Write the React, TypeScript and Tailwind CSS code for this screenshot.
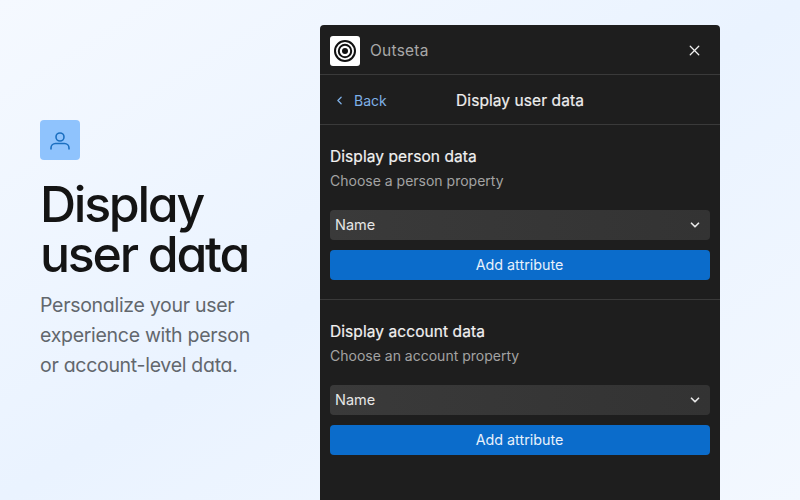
import { ChevronDown, ChevronLeft, X } from "lucide-react";

function AttributeSection({ title, hint, border }: { title: string; hint: string; border?: boolean }) {
  return (
    <section className={`px-2.5 pt-[22px] pb-[19px] ${border ? "border-b border-[#3a3a3a]" : ""}`}>
      <h2 className="text-[15.5px] leading-[20px] font-normal tracking-[0.005em] text-[#f1f1f1] [-webkit-text-stroke:0.2px_#f1f1f1]">{title}</h2>
      <p className="mt-[5px] text-[14px] leading-[18px] text-[#a3a3a3]">{hint}</p>
      <div className="mt-[20px] flex h-[30px] items-center justify-between rounded-[4px] bg-gradient-to-r from-[#3a3a3a] to-[#333333] pr-2 pb-px pl-[5px] text-[14.5px] text-[#e6e6e6]">
        <span>Name</span>
        <ChevronDown size={14} strokeWidth={3} className="text-[#e6e6e6]" />
      </div>
      <button className="mt-2.5 flex h-[30px] w-full items-center justify-center rounded-[4px] bg-[#0b6ccb] pr-px text-[14.3px] text-[#e8f1fb]">
        Add attribute
      </button>
    </section>
  );
}

export default function App() {
  return (
    <div className="flex h-[500px] w-[800px] overflow-hidden bg-gradient-to-br from-[#f5f9ff] via-[#eaf3ff] to-[#f3f8ff] font-['Inter',sans-serif]">
      <div className="w-[320px] shrink-0 pt-[120px] pl-10">
        <div className="flex h-10 w-10 items-center justify-center rounded-[4px] bg-[#8fc3fd]">
          <svg width="24" height="24" viewBox="0 0 24 24" fill="none" stroke="#1b6fc0" strokeWidth="1.6">
            <circle cx="12" cy="9" r="4" />
            <path d="M3 21.5v-1.5a4.5 4.5 0 0 1 4.5-4.5h9a4.5 4.5 0 0 1 4.5 4.5v1.5" />
          </svg>
        </div>
        <h1 className="mt-[19px] text-[50px] leading-[50px] font-medium tracking-[-0.045em] text-[#141414] [font-feature-settings:'cv11']">
          Display
          <br />
          user data
        </h1>
        <p className="mt-[11px] text-[19.5px] leading-[30px] tracking-[-0.015em] text-[#62676d] [font-feature-settings:'cv11']">
          Personalize your user
          <br />
          experience with person
          <br />
          or account-level data.
        </p>
      </div>

      <div className="mt-[25px] h-[500px] w-[400px] shrink-0 rounded-t-[4px] bg-[#1e1e1e]">
        <header className="flex h-[50px] items-center justify-between border-b border-[#3a3a3a] pt-0.5 pr-[17px] pl-2.5">
          <div className="flex items-center gap-2.5">
            <div className="flex h-[30px] w-[30px] items-center justify-center rounded-[3px] bg-white">
              <svg width="24" height="24" viewBox="0 0 24 24" fill="none" stroke="#111" strokeWidth="2">
                <circle cx="12" cy="12" r="10" />
                <circle cx="12" cy="12" r="6.2" />
                <circle cx="12" cy="12" r="3" fill="#111" stroke="none" />
              </svg>
            </div>
            <span className="text-[15.5px] tracking-[0.015em] text-[#a8a8a8]">Outseta</span>
          </div>
          <X size={17} strokeWidth={1.8} className="text-[#f1f1f1]" />
        </header>

        <div className="relative flex h-[50px] items-center justify-center border-b border-[#3a3a3a] pt-0.5">
          <div className="absolute left-[13px] flex items-center gap-[8px] text-[#7fb0e6]">
            <ChevronLeft size={13} strokeWidth={2.4} />
            <span className="text-[14px]">Back</span>
          </div>
          <span className="text-[15.5px] tracking-[0.005em] text-[#eeeeee] [-webkit-text-stroke:0.2px_#eeeeee]">Display user data</span>
        </div>

        <AttributeSection title="Display person data" hint="Choose a person property" border />
        <AttributeSection title="Display account data" hint="Choose an account property" />
      </div>
    </div>
  );
}
